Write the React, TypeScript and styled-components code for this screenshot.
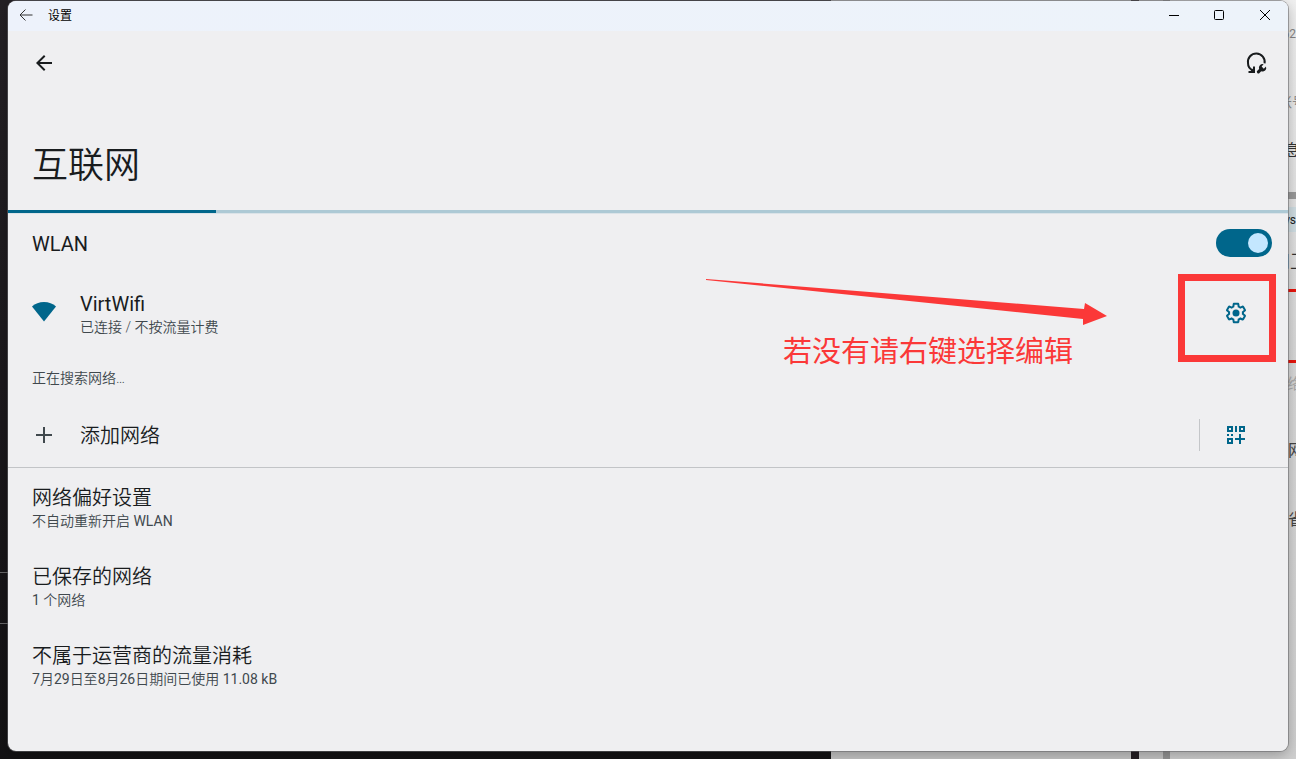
import React from "react";
import styled, { createGlobalStyle } from "styled-components";

const cjk = `"Noto Sans CJK SC", sans-serif`;
const accent = "#00668b";
const markRed = "#fb3838";

const GlobalStyle = createGlobalStyle`
  * { box-sizing: border-box; }
  body { margin: 0; background: #1b191c; font-family: Roboto, ${cjk}; }
  button { border: 0; padding: 0; background: none; font: inherit; color: inherit; cursor: pointer; }
  h1, h2, p, ul { margin: 0; padding: 0; font-weight: inherit; }
  svg { display: block; }
`;

const Desktop = styled.div`
  position: relative;
  display: flex;
  min-height: 100vh;
  padding: 1px 8px 8px;
  overflow: hidden;
  background: linear-gradient(#242125, #1c191d 50%, #131214);
`;

/* Windows left open behind the settings window */
const BackWindow = styled.div<{ $width: number; $tone: string }>`
  position: absolute;
  top: 0;
  bottom: 0;
  right: 0;
  width: ${(p) => p.$width}px;
  background: ${(p) => p.$tone};
`;

const BackGap = styled.div<{ $right: number; $width: number; $color: string }>`
  position: absolute;
  top: 0;
  bottom: 0;
  right: ${(p) => p.$right}px;
  width: ${(p) => p.$width}px;
  background: ${(p) => p.$color};
`;

const BackBand = styled.div<{ $top: number; $height: number; $color: string }>`
  position: absolute;
  top: ${(p) => p.$top}px;
  right: 0;
  width: 40px;
  height: ${(p) => p.$height}px;
  background: ${(p) => p.$color};
`;

const BackText = styled.span<{ $top: number; $size: number; $color: string; $shift?: number }>`
  position: absolute;
  top: ${(p) => p.$top}px;
  right: ${(p) => p.$shift ?? -8}px;
  color: ${(p) => p.$color};
  font-size: ${(p) => p.$size}px;
  line-height: 20px;
  white-space: nowrap;
`;

const Scratch = styled.div<{ $top: number }>`
  position: absolute;
  top: ${(p) => p.$top}px;
  left: 0;
  width: 8px;
  height: 1px;
  background: #68686a;
`;

const Window = styled.div`
  position: relative;
  display: flex;
  flex: 1;
  flex-direction: column;
  min-width: 0;
  overflow: hidden;
  border-radius: 8px;
  background: #efeff1;
  color: #191c1e;
`;

const WindowFrame = styled.div`
  position: relative;
  display: flex;
  flex: 1;
  min-width: 0;
  border-radius: 8px;
  box-shadow: 0 0 0 1px rgba(100, 100, 104, 0.55), 0 4px 14px rgba(0, 0, 0, 0.28);
`;

const TitleBar = styled.header`
  display: flex;
  align-items: center;
  height: 30px;
  padding-left: 10px;
  background: linear-gradient(90deg, #edf2fb, #edf3fa);
  color: #000;
`;

const TitleText = styled.span`
  flex: 1;
  margin-left: 14px;
  font: 12px/16px "Liberation Sans", ${cjk};
`;

const CaptionButton = styled.button<{ $width: number }>`
  display: flex;
  align-items: center;
  justify-content: center;
  width: ${(p) => p.$width}px;
  height: 30px;
`;

const Toolbar = styled.div`
  display: flex;
  align-items: center;
  justify-content: space-between;
  height: 64px;
  padding: 0 20px 0 24px;
`;

const IconButton = styled.button`
  display: flex;
  flex: none;
  align-items: center;
  justify-content: center;
  width: 24px;
  height: 24px;
`;

const PageTitle = styled.h1`
  padding: 45px 24px 18px;
  font-size: 36px;
  line-height: 52px;
  font-weight: 350;
`;

const Progress = styled.div`
  height: 4px;
  background: linear-gradient(#adc9d5 3px, #dbe3e8 3px);
`;

const ProgressValue = styled.div`
  width: 208px;
  height: 3px;
  background: ${accent};
`;

const WlanRow = styled.label`
  display: flex;
  align-items: center;
  justify-content: space-between;
  height: 58px;
  padding: 0 16px 0 24px;
  font-size: 20px;
  line-height: 24px;
`;

const WlanName = styled.span`
  padding-top: 2px;
`;

const Switch = styled.input`
  appearance: none;
  display: flex;
  align-items: center;
  width: 56px;
  height: 28px;
  margin: 0;
  padding: 0 4px;
  border-radius: 14px;
  background: #8b9297;
  &::before {
    content: "";
    width: 20px;
    height: 20px;
    border-radius: 50%;
    background: #c4e7ff;
  }
  &:checked {
    justify-content: flex-end;
    background: ${accent};
  }
`;

const NetworkRow = styled.div<{ $height: number }>`
  position: relative;
  display: flex;
  align-items: center;
  height: ${(p) => p.$height}px;
  padding: 0 40px 0 24px;
`;

const LeadIcon = styled.span`
  flex: none;
  width: 24px;
  margin-right: 24px;
`;

const TextBlock = styled.div`
  flex: 1;
  min-width: 0;
  padding-top: 2px;
`;

const NetworkText = styled(TextBlock)`
  padding-top: 4px;
`;

const ItemTitle = styled.h2`
  font-size: 20px;
  line-height: 24px;
  font-weight: 350;
`;

const ItemNote = styled.p`
  color: #40484d;
  font-size: 14px;
  line-height: 22px;
  font-weight: 350;
`;

const Latin = styled.span`
  font-weight: 400;
`;

const Searching = styled(ItemNote)`
  padding: 13px 24px 14px;
`;

const Separator = styled.span`
  width: 1px;
  height: 32px;
  margin-right: 24px;
  background: #c4c6c9;
`;

const LinkList = styled.ul`
  list-style: none;
  border-top: 1px solid #c2c4c7;
  padding-top: 1px;
`;

const LinkItem = styled.li`
  height: 79px;
  padding: 17px 24px 0;
`;

/* Red markup laid over the network row */
const MarkBox = styled.div`
  position: absolute;
  top: 2px;
  right: 12px;
  width: 98px;
  height: 88px;
  border: 7px solid ${markRed};
  pointer-events: none;
`;

const MarkArrow = styled.svg`
  position: absolute;
  top: 6px;
  right: 180px;
  pointer-events: none;
`;

const MarkText = styled.p`
  position: absolute;
  top: 62px;
  right: 215px;
  color: ${markRed};
  font-size: 29px;
  line-height: 36px;
  white-space: nowrap;
`;

const SettingsGear = () => (
  <svg width="24" height="24" viewBox="0 0 24 24" fill={accent}>
    <path d="M13.85 22.25h-3.7c-.74 0-1.36-.54-1.45-1.27l-.27-1.89c-.27-.14-.53-.29-.79-.46l-1.8.72c-.7.26-1.47-.03-1.81-.65L2.2 15.53c-.35-.66-.2-1.44.36-1.88l1.53-1.19c-.01-.15-.02-.3-.02-.46 0-.15.01-.31.02-.46l-1.52-1.19c-.59-.45-.74-1.26-.37-1.88l1.85-3.19c.34-.62 1.11-.9 1.79-.63l1.81.73c.26-.17.52-.32.78-.46l.27-1.91c.09-.7.71-1.25 1.44-1.25h3.7c.74 0 1.36.54 1.45 1.27l.27 1.89c.27.14.53.29.79.46l1.8-.72c.71-.26 1.48.03 1.82.65l1.84 3.18c.36.66.2 1.44-.36 1.88l-1.52 1.19c.01.15.02.3.02.46s-.01.31-.02.46l1.52 1.19c.56.45.72 1.23.37 1.86l-1.86 3.22c-.34.62-1.11.9-1.8.63l-1.8-.72c-.26.17-.52.32-.78.46l-.27 1.91c-.1.68-.72 1.22-1.46 1.22zm-3.23-2h2.76l.37-2.55.53-.22c.44-.18.88-.44 1.34-.78l.45-.34 2.38.96 1.38-2.4-2.03-1.58.07-.56c.03-.26.06-.51.06-.78s-.03-.53-.06-.78l-.07-.56 2.03-1.58-1.39-2.4-2.39.96-.45-.35c-.42-.32-.87-.58-1.33-.77l-.52-.22-.37-2.55h-2.76l-.37 2.55-.53.21c-.44.19-.88.44-1.34.79l-.45.33-2.38-.95-1.39 2.39 2.03 1.58-.07.56a7 7 0 0 0-.06.79c0 .26.02.53.06.78l.07.56-2.03 1.58 1.38 2.4 2.39-.96.45.35c.43.33.86.58 1.33.77l.53.22z" />
    <circle cx="12" cy="12" r="3.5" />
  </svg>
);

const ResetIcon = () => (
  <svg width="24" height="24" viewBox="0 0 24 24" fill="none" stroke="#191c1e" strokeWidth="2">
    <path d="M20.6 12.300A8.400 8.400 0 1 0 4 12c0 3 1.700 5.800 4.400 7.200" />
    <path d="M4.500 21H10V15.500" />
    <path d="M5.500 21L10 21V16.500z" fill="#191c1e" stroke="none" />
    <path
      d="M22 15.600a3.700 3.700 0 0 1-4.800 4.700l-1.700 1.600a1.500 1.500 0 0 1-2.200-2.200l1.800-1.700a3.700 3.700 0 0 1 4.500-4.800l-2 2.300 2.200 2.200z"
      fill="#191c1e"
      stroke="none"
    />
  </svg>
);

const QrAddIcon = () => (
  <svg width="24" height="24" viewBox="0 0 24 24" fill={accent} shapeRendering="crispEdges">
    <path
      fillRule="evenodd"
      d="M3 3h6v6H3zM5 5v2h2V5zM15 3h6v6h-6zM17 5v2h2V5zM3 15h6v6H3zM5 17v2h2v-2zM11 3h2v6h-2zM3 11h2v2H3zM7 11h2v2H7zM15 11h2v4h4v2h-4v4h-2v-4h-4v-2h4z"
    />
  </svg>
);

export default function App() {
  return (
    <>
      <GlobalStyle />
      <Desktop>
        <BackWindow $width={465} $tone="#c6c6c6" aria-hidden="true">
          <BackGap $right={157} $width={8} $color="#241e22" />
          <BackGap $right={126} $width={7} $color="#959595" />
        </BackWindow>
        <BackWindow $width={126} $tone="linear-gradient(#f0f0f0, #d9d9d9 45%, #cfcfcf)" aria-hidden="true">
          <BackText $top={24} $size={12} $color="#858585" $shift={0}>62</BackText>
          <BackText $top={92} $size={14} $color="#909090" $shift={-10}>账号</BackText>
          <BackText $top={141} $size={16} $color="#333" $shift={-4}>信息</BackText>
          <BackBand $top={192} $height={7} $color="#999" />
          <BackBand $top={207} $height={25} $color="#cfdde2" />
          <BackText $top={210} $size={12} $color="#222" $shift={0}>Sys</BackText>
          <BackText $top={252} $size={18} $color="#333" $shift={-12}>和卫</BackText>
          <BackBand $top={289} $height={3} $color="#e8140c" />
          <BackBand $top={360} $height={3} $color="#e8140c" />
          <BackText $top={374} $size={15} $color="#aaa" $shift={-6}>网络</BackText>
          <BackText $top={441} $size={16} $color="#444" $shift={-8}>网</BackText>
          <BackText $top={510} $size={16} $color="#444" $shift={-8}>省</BackText>
        </BackWindow>
        <Scratch $top={572} />
        <Scratch $top={623} />

        <WindowFrame>
          <Window>
            <TitleBar>
              <CaptionButton $width={16} aria-label="返回">
                <svg width="16" height="16" viewBox="0 0 16 16" fill="none" stroke="#333">
                  <path d="M14.500 7H2M7.500 1.500L2 7L7.500 12.500" />
                </svg>
              </CaptionButton>
              <TitleText>设置</TitleText>
              <CaptionButton $width={46} aria-label="最小化">
                <svg width="12" height="12" viewBox="0 0 12 12" stroke="#000">
                  <path d="M1 5.500H11" />
                </svg>
              </CaptionButton>
              <CaptionButton $width={44} aria-label="最大化">
                <svg width="12" height="12" viewBox="0 0 12 12" fill="none" stroke="#000">
                  <rect x="1.500" y="0.500" width="9" height="9" rx="1" />
                </svg>
              </CaptionButton>
              <CaptionButton $width={47} aria-label="关闭">
                <svg width="12" height="12" viewBox="0 0 12 12" stroke="#000">
                  <path d="M1 0L11 10M11 0L1 10" />
                </svg>
              </CaptionButton>
            </TitleBar>

            <Toolbar>
              <IconButton aria-label="向上导航">
                <svg width="24" height="24" viewBox="0 0 24 24" fill="#191c1e">
                  <path d="M20 11H7.830l5.590-5.590L12 4l-8 8 8 8 1.410-1.410L7.830 13H20z" />
                </svg>
              </IconButton>
              <IconButton aria-label="重置">
                <ResetIcon />
              </IconButton>
            </Toolbar>

            <PageTitle>互联网</PageTitle>
            <Progress>
              <ProgressValue />
            </Progress>

            <WlanRow>
              <WlanName>WLAN</WlanName>
              <Switch type="checkbox" role="switch" defaultChecked />
            </WlanRow>

            <NetworkRow $height={82}>
              <LeadIcon>
                <svg width="24" height="24" viewBox="0 0 24 24" fill={accent}>
                  <path d="M12 1C7.300 1 3.100 2.600 0 5.400L12 20.500L24 5.400C20.900 2.600 16.700 1 12 1z" />
                </svg>
              </LeadIcon>
              <NetworkText>
                <ItemTitle>
                  <Latin>VirtWifi</Latin>
                </ItemTitle>
                <ItemNote>已连接 / 不按流量计费</ItemNote>
              </NetworkText>
              <IconButton aria-label="网络设置">
                <SettingsGear />
              </IconButton>
              <MarkBox />
              <MarkArrow width="402" height="48" viewBox="0 0 402 48" fill={markRed}>
                <path d="M0 1L378 31L379 25L401 38L377 47V41L0 2z" />
              </MarkArrow>
              <MarkText>若没有请右键选择编辑</MarkText>
            </NetworkRow>

            <Searching>正在搜索网络…</Searching>

            <NetworkRow $height={64}>
              <LeadIcon>
                <svg width="24" height="24" viewBox="0 0 24 24" fill="#40484d">
                  <path d="M20 13h-7v7h-2v-7H4v-2h7V4h2v7h7z" />
                </svg>
              </LeadIcon>
              <TextBlock>
                <ItemTitle>添加网络</ItemTitle>
              </TextBlock>
              <Separator />
              <IconButton aria-label="扫描二维码">
                <QrAddIcon />
              </IconButton>
            </NetworkRow>

            <LinkList>
              <LinkItem>
                <ItemTitle>网络偏好设置</ItemTitle>
                <ItemNote>
                  不自动重新开启 <Latin>WLAN</Latin>
                </ItemNote>
              </LinkItem>
              <LinkItem>
                <ItemTitle>已保存的网络</ItemTitle>
                <ItemNote>
                  <Latin>1</Latin> 个网络
                </ItemNote>
              </LinkItem>
              <LinkItem>
                <ItemTitle>不属于运营商的流量消耗</ItemTitle>
                <ItemNote>
                  <Latin>7</Latin>月<Latin>29</Latin>日至<Latin>8</Latin>月<Latin>26</Latin>日期间已使用{" "}
                  <Latin>11.08 kB</Latin>
                </ItemNote>
              </LinkItem>
            </LinkList>
          </Window>
        </WindowFrame>
      </Desktop>
    </>
  );
}
